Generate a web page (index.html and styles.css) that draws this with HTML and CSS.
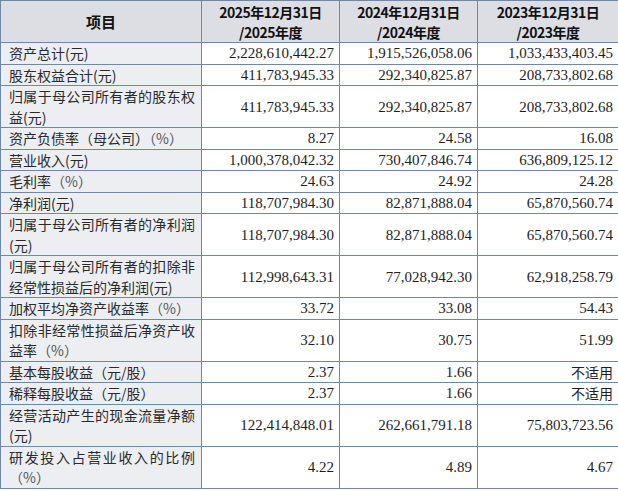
FILE: index.html
```html
<!DOCTYPE html>
<html lang="zh">
<head>
<meta charset="utf-8">
<link rel="stylesheet" href="styles.css">
</head>
<body>
<table class="fin">
  <colgroup>
    <col class="c1"><col class="c2"><col class="c3"><col class="c4">
  </colgroup>
  <thead>
    <tr class="head">
      <th class="item">项目</th>
      <th>2025年12月31日<br>/2025年度</th>
      <th>2024年12月31日<br>/2024年度</th>
      <th>2023年12月31日<br>/2023年度</th>
    </tr>
  </thead>
  <tbody>
    <tr class="one"><td class="lbl">资产总计(元)</td><td>2,228,610,442.27</td><td>1,915,526,058.06</td><td>1,033,433,403.45</td></tr>
    <tr class="one"><td class="lbl">股东权益合计(元)</td><td>411,783,945.33</td><td>292,340,825.87</td><td>208,733,802.68</td></tr>
    <tr class="two"><td class="lbl"><span class="jl">归属于母公司所有者的股东权</span><span>益(元)</span></td><td>411,783,945.33</td><td>292,340,825.87</td><td>208,733,802.68</td></tr>
    <tr class="one"><td class="lbl">资产负债率（母公司）<span class="pct">（%）</span></td><td>8.27</td><td>24.58</td><td>16.08</td></tr>
    <tr class="one"><td class="lbl">营业收入(元)</td><td>1,000,378,042.32</td><td>730,407,846.74</td><td>636,809,125.12</td></tr>
    <tr class="one"><td class="lbl">毛利率<span class="pct">（%）</span></td><td>24.63</td><td>24.92</td><td>24.28</td></tr>
    <tr class="one"><td class="lbl">净利润(元)</td><td>118,707,984.30</td><td>82,871,888.04</td><td>65,870,560.74</td></tr>
    <tr class="two"><td class="lbl"><span class="jl">归属于母公司所有者的净利润</span><span>(元)</span></td><td>118,707,984.30</td><td>82,871,888.04</td><td>65,870,560.74</td></tr>
    <tr class="two"><td class="lbl"><span class="jl">归属于母公司所有者的扣除非</span><span>经常性损益后的净利润(元)</span></td><td>112,998,643.31</td><td>77,028,942.30</td><td>62,918,258.79</td></tr>
    <tr class="one"><td class="lbl">加权平均净资产收益率<span class="pct">（%）</span></td><td>33.72</td><td>33.08</td><td>54.43</td></tr>
    <tr class="two"><td class="lbl"><span class="jl">扣除非经常性损益后净资产收</span><span>益率</span><span class="pct">（%）</span></td><td>32.10</td><td>30.75</td><td>51.99</td></tr>
    <tr class="one"><td class="lbl">基本每股收益（元/股）</td><td>2.37</td><td>1.66</td><td class="cn">不适用</td></tr>
    <tr class="one"><td class="lbl">稀释每股收益（元/股）</td><td>2.37</td><td>1.66</td><td class="cn">不适用</td></tr>
    <tr class="two"><td class="lbl"><span class="jl">经营活动产生的现金流量净额</span><span>(元)</span></td><td>122,414,848.01</td><td>262,661,791.18</td><td>75,803,723.56</td></tr>
    <tr class="two"><td class="lbl"><span class="jl">研发投入占营业收入的比例</span><span class="pct">（%）</span></td><td>4.22</td><td>4.89</td><td>4.67</td></tr>
  </tbody>
</table>
</body>
</html>
```
FILE: styles.css
```css
html, body {
  margin: 0;
  padding: 0;
  background: #ffffff;
}

.fin {
  border-collapse: collapse;
  table-layout: fixed;
  width: 618px;
  font-family: "Liberation Serif", "Noto Sans CJK SC", serif;
  font-size: 15px;
  color: #1e1e1e;
}

.c1 { width: 201px; }
.c2 { width: 138px; }
.c3 { width: 138px; }
.c4 { width: 141px; }

.fin th,
.fin td {
  border: 1px solid #7088a8;
  padding: 0 5px 0 7px;
  line-height: 20px;
}

.head th {
  height: 41px;
  background: #dcdee3;
  font-family: "Noto Sans CJK SC", sans-serif;
  font-weight: 700;
  font-size: 14px;
  letter-spacing: -0.5px;
  line-height: 20px;
  text-align: center;
  color: #111;
  padding: 0 4px;
}

.head th.item {
  font-size: 15px;
  letter-spacing: 0;
}

.one td { height: 20px; }
.two td { height: 41px; }

.fin td {
  text-align: right;
  padding-right: 5px;
  vertical-align: middle;
}

.fin td.lbl {
  background: #eceef2;
  text-align: left;
  font-family: "Noto Sans CJK SC", sans-serif;
  font-size: 14px;
  line-height: 20.5px;
  color: #2a2a2a;
  padding: 0 6px 0 8px;
}

.fin td.cn {
  font-family: "Noto Sans CJK SC", sans-serif;
  font-size: 14px;
}

.pct {
  color: #555;
}

.jl {
  display: block;
  text-align: justify;
  text-align-last: justify;
}
```
